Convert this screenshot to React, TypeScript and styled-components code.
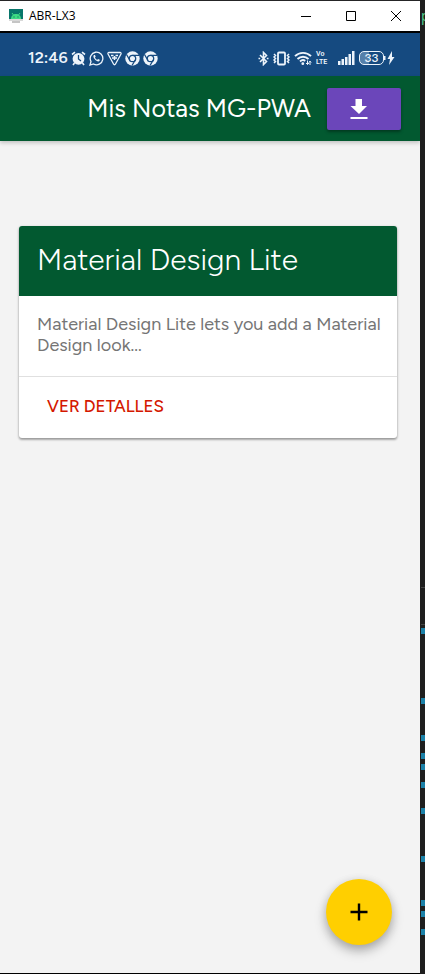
import React from "react";
import styled, { createGlobalStyle } from "styled-components";

const GlobalStyle = createGlobalStyle`
  *, *::before, *::after { box-sizing: border-box; }
  body { margin: 0; background: #1e1e1e; font-family: "Figtree", Lato, sans-serif; }
  button { font: inherit; border: 0; padding: 0; background: none; cursor: pointer; }
`;

const Desktop = styled.div`
  display: flex;
  min-height: 100vh;
  overflow: hidden;
`;

const Window = styled.div`
  flex: 1;
  min-width: 0;
  display: flex;
  flex-direction: column;
  background: #f3f3f3;
  border-top: 1px solid #252526;
  border-bottom: 1px solid #000;
`;

const TitleBar = styled.div`
  display: flex;
  align-items: center;
  height: 32px;
  padding: 0 2px 0 8px;
  background: #fff;
  border-bottom: 2px solid #000;
`;

const WindowTitle = styled.span`
  flex: 1;
  margin-left: 5px;
  color: #000;
  font: 12px/16px "Open Sans", sans-serif;
`;

const WindowButton = styled.button`
  display: grid;
  place-items: center;
  width: 45px;
  height: 30px;
`;

const StatusBar = styled.div`
  display: flex;
  align-items: center;
  justify-content: space-between;
  height: 43px;
  padding: 7px 25px 0 28px;
  background: #154a80;
  color: #edf4fb;
`;

const StatusGroup = styled.div<{ $gap: number }>`
  display: flex;
  align-items: center;
  gap: ${(p) => p.$gap}px;
`;

const Clock = styled.span`
  font: 600 16px/20px Figtree, Lato, sans-serif;
`;

const Network = styled.span`
  display: flex;
  flex-direction: column;
  width: 14px;
  margin-right: 4px;
  font: 600 7px/8px Roboto, sans-serif;
`;

const Battery = styled.span`
  display: flex;
  align-items: center;
`;

const BatteryLevel = styled.span`
  display: grid;
  place-items: center;
  width: 25px;
  height: 14px;
  border: 1px solid #edf4fb;
  border-radius: 5px;
  background: linear-gradient(90deg, #5580aa 40%, #154a80 40%);
  font: 600 12px/12px Lato, sans-serif;
`;

const Header = styled.header`
  display: flex;
  align-items: center;
  justify-content: flex-end;
  gap: 16px;
  height: 65px;
  padding-right: 19px;
  background: #025930;
  box-shadow: 0 2px 4px rgba(0, 0, 0, 0.2);
`;

const AppTitle = styled.h1`
  margin: 0;
  padding-bottom: 2px;
  color: #fff;
  font-size: 25px;
  font-weight: 400;
  line-height: 32px;
  white-space: nowrap;
`;

const InstallButton = styled.button`
  display: grid;
  place-items: center;
  width: 74px;
  height: 42px;
  padding-right: 10px;
  border-radius: 2px;
  background: #6b46ba;
  box-shadow: 0 2px 3px rgba(0, 0, 0, 0.35);
`;

const Main = styled.main`
  flex: 1;
  display: flex;
  flex-direction: column;
  justify-content: space-between;
  padding: 85px 23px 28px 19px;
`;

const Card = styled.article`
  overflow: hidden;
  border-radius: 3px;
  background: #fff;
  box-shadow: 0 2px 2px rgba(0, 0, 0, 0.2), 0 1px 3px rgba(0, 0, 0, 0.28);
`;

const CardTitle = styled.h2`
  margin: 0;
  padding: 15px 18px 17px;
  background: #025930;
  color: #fff;
  font-size: 30px;
  font-weight: 300;
  line-height: 38px;
`;

const CardText = styled.p`
  margin: 0;
  padding: 18px 12px 20px 18px;
  color: #757575;
  font-size: 18px;
  line-height: 21px;
`;

const CardActions = styled.div`
  padding: 9px;
  border-top: 1px solid #e0e0e0;
`;

const DetailsButton = styled.button`
  display: block;
  padding: 0 19px 2px;
  color: #d41800;
  font-size: 17px;
  font-weight: 500;
  line-height: 41px;
`;

const AddButton = styled.button`
  align-self: flex-end;
  display: grid;
  place-items: center;
  width: 66px;
  height: 66px;
  margin-right: 5px;
  border-radius: 50%;
  background: #ffcf00;
  box-shadow: 0 6px 12px rgba(0, 0, 0, 0.26), 0 2px 10px rgba(0, 0, 0, 0.12);
`;

const EditorEdge = styled.aside`
  display: flex;
  flex-direction: column;
  width: 5px;
  overflow: hidden;
  background: #1e1e1e;
  padding-left: 1px;
`;

const CodeText = styled.span`
  height: 24px;
  margin-top: 4px;
  color: #4ec98a;
  font: 14px/24px "Noto Sans", sans-serif;
`;

const Rule = styled.span<{ $gap: number }>`
  height: 1px;
  margin-top: ${(p) => p.$gap}px;
  background: #444;
`;

const Mark = styled.span<{ $gap: number }>`
  height: 6px;
  margin-top: ${(p) => p.$gap}px;
  background: #1b81a8;
`;

const markGaps = [3, 64, 31, 12, 5, 12, 20, 42, 38, 5, 12];

const AppLogo = () => (
  <svg width="16" height="16" viewBox="0 0 16 16" aria-hidden="true">
    <path d="M1 1h14v11H1z" fill="#08766b" />
    <path d="M3 11c0-3 2-5 5-5s5 2 5 5z" fill="#3ddc84" />
    <path d="m4 5 1.500 2M12 5l-1.500 2" stroke="#3ddc84" />
    <path d="M5.500 8.500h1v1h-1zM9.500 8.500h1v1h-1z" fill="#075e54" />
    <path d="M1 11h14v2H1z" fill="#d8d8d8" />
    <path d="M4 13h8v2H4z" fill="#c5c5c5" />
  </svg>
);

const Alarm = () => (
  <svg width="15" height="15" viewBox="0 0 15 15" aria-hidden="true">
    <circle cx="7.500" cy="7.800" r="5.900" fill="currentColor" />
    <path d="m1 3.500 3-2.300M14 3.500l-3-2.300M3.500 12 2 14M11.500 12l1.500 2" stroke="currentColor" strokeWidth="1.600" />
    <path d="M7.500 4v4l2.500 2" fill="none" stroke="#154a80" strokeWidth="1.300" />
  </svg>
);

const WhatsApp = () => (
  <svg width="15" height="15" viewBox="0 0 15 15" fill="none" aria-hidden="true">
    <path d="m1 14 1-3.500A6.300 6.300 0 1 1 4.500 13z" stroke="currentColor" strokeWidth="1.300" />
    <path d="M5 4c-1 .7-.8 2.300.8 4.300 1.700 2 3.800 2.700 4.800 1.500l.2-1L9 8l-.9.900C7 8.400 6.300 7.600 5.900 6.600l.8-.8L6 4z" fill="currentColor" />
  </svg>
);

const Triangle = () => (
  <svg width="15" height="15" viewBox="0 0 15 15" fill="none" stroke="currentColor" aria-hidden="true">
    <path d="M2 1.500h11c1 0 1.300.8 1 1.500L8.500 13c-.5 1-1.500 1-2 0L1 3c-.3-.7 0-1.500 1-1.500z" strokeWidth="1.300" />
    <path d="M4 4.500h2.500M8.500 4.500H11M5 7h5M7.500 5v4" strokeWidth="1.500" />
  </svg>
);

const Chrome = () => (
  <svg width="15" height="15" viewBox="0 0 15 15" aria-hidden="true">
    <circle cx="7.500" cy="7.500" r="7.200" fill="currentColor" />
    <circle cx="7.500" cy="7.500" r="3.200" fill="none" stroke="#154a80" strokeWidth="1.300" />
    <path d="M7.500 4.300H14M4.700 9 1.500 3.500M10.300 9 7 14.500" stroke="#154a80" strokeWidth="1.300" />
  </svg>
);

const Bluetooth = () => (
  <svg width="11" height="15" viewBox="0 0 11 15" fill="none" stroke="currentColor" strokeWidth="1.600" aria-hidden="true">
    <path d="m2 4 6.500 6.500L5.500 13.500v-12l3 3L2 11" />
    <path d="M.5 7.500h1.700M8.800 7.500h1.700" />
  </svg>
);

const Vibrate = () => (
  <svg width="17" height="15" viewBox="0 0 17 15" fill="none" stroke="currentColor" aria-hidden="true">
    <rect x="5" y="1.500" width="7" height="12" rx="1" strokeWidth="1.800" />
    <path d="m1 3 1.500 1.500L1 6l1.500 1.500L1 9l1.500 1.500L1 12M16 3l-1.500 1.500L16 6l-1.500 1.500L16 9l-1.500 1.500L16 12" strokeWidth="1.500" />
  </svg>
);

const Wifi = () => (
  <svg width="18" height="15" viewBox="0 0 18 15" fill="none" stroke="currentColor" aria-hidden="true">
    <path d="M1 5.200c4.500-4.500 11.500-4.500 16 0M3.500 8c3.200-3 7.800-3 11 0M6 10.500c1.800-1.700 3.800-1.700 5.200-.5" strokeWidth="1.900" />
    <circle cx="8.800" cy="12.700" r="1.400" fill="currentColor" stroke="none" />
    <path d="M13.500 9.500v4M12 12l1.500 1.500L15 12M16 14v-4M14.800 11.500 16 10.200l1.200 1.300" strokeWidth="1" />
  </svg>
);

const Signal = () => (
  <svg width="17" height="14" viewBox="0 0 17 14" fill="currentColor" aria-hidden="true">
    <path d="M0 10h2.500v4H0zM3.500 8H6v6H3.500zM7 6h2.500v8H7zM10.500 3H13v11h-2.500zM14 0h2.500v14H14z" />
  </svg>
);

const Bolt = () => (
  <svg width="11" height="14" viewBox="0 0 11 14" fill="currentColor" aria-hidden="true">
    <path d="M0 5h1.500v4H0zM8 0 3.500 8H6l-1 6 5.500-8H8z" />
  </svg>
);

export default function App() {
  return (
    <>
      <GlobalStyle />
      <Desktop>
        <Window>
          <TitleBar>
            <AppLogo />
            <WindowTitle>ABR-LX3</WindowTitle>
            <WindowButton aria-label="Minimizar">
              <svg width="10" height="10" viewBox="0 0 10 10"><path d="M0 5.500h10" stroke="#000" /></svg>
            </WindowButton>
            <WindowButton aria-label="Maximizar">
              <svg width="10" height="10" viewBox="0 0 10 10"><path d="M.5.500h9v9h-9z" fill="none" stroke="#000" /></svg>
            </WindowButton>
            <WindowButton aria-label="Cerrar">
              <svg width="10" height="10" viewBox="0 0 10 10"><path d="m0 0 10 10M10 0 0 10" stroke="#000" /></svg>
            </WindowButton>
          </TitleBar>
          <StatusBar>
            <StatusGroup $gap={3}>
              <Clock>12:46</Clock>
              <Alarm />
              <WhatsApp />
              <Triangle />
              <Chrome />
              <Chrome />
            </StatusGroup>
            <StatusGroup $gap={4}>
              <Bluetooth />
              <Vibrate />
              <Wifi />
              <Network>
                <span>Vo</span>
                <span>LTE</span>
              </Network>
              <Signal />
              <Battery>
                <BatteryLevel>33</BatteryLevel>
                <Bolt />
              </Battery>
            </StatusGroup>
          </StatusBar>
          <Header>
            <AppTitle>Mis Notas MG-PWA</AppTitle>
            <InstallButton aria-label="Instalar">
              <svg width="18" height="20" viewBox="0 0 18 20" fill="#fff"><path d="M5.500 0h6.500v7h5L9 15 .5 7h5zM.5 18h17v2H.5z" /></svg>
            </InstallButton>
          </Header>
          <Main>
            <Card>
              <CardTitle>Material Design Lite</CardTitle>
              <CardText>Material Design Lite lets you add a Material Design look...</CardText>
              <CardActions>
                <DetailsButton>VER DETALLES</DetailsButton>
              </CardActions>
            </Card>
            <AddButton aria-label="Agregar nota">
              <svg width="18" height="18" viewBox="0 0 18 18"><path d="M9 .5v17M.5 9h17" stroke="#000" strokeWidth="2.400" /></svg>
            </AddButton>
          </Main>
        </Window>
        <EditorEdge>
          <CodeText>p</CodeText>
          <Rule $gap={559} />
          <Rule $gap={36} />
          {markGaps.map((gap, i) => (
            <Mark key={i} $gap={gap} />
          ))}
        </EditorEdge>
      </Desktop>
    </>
  );
}
